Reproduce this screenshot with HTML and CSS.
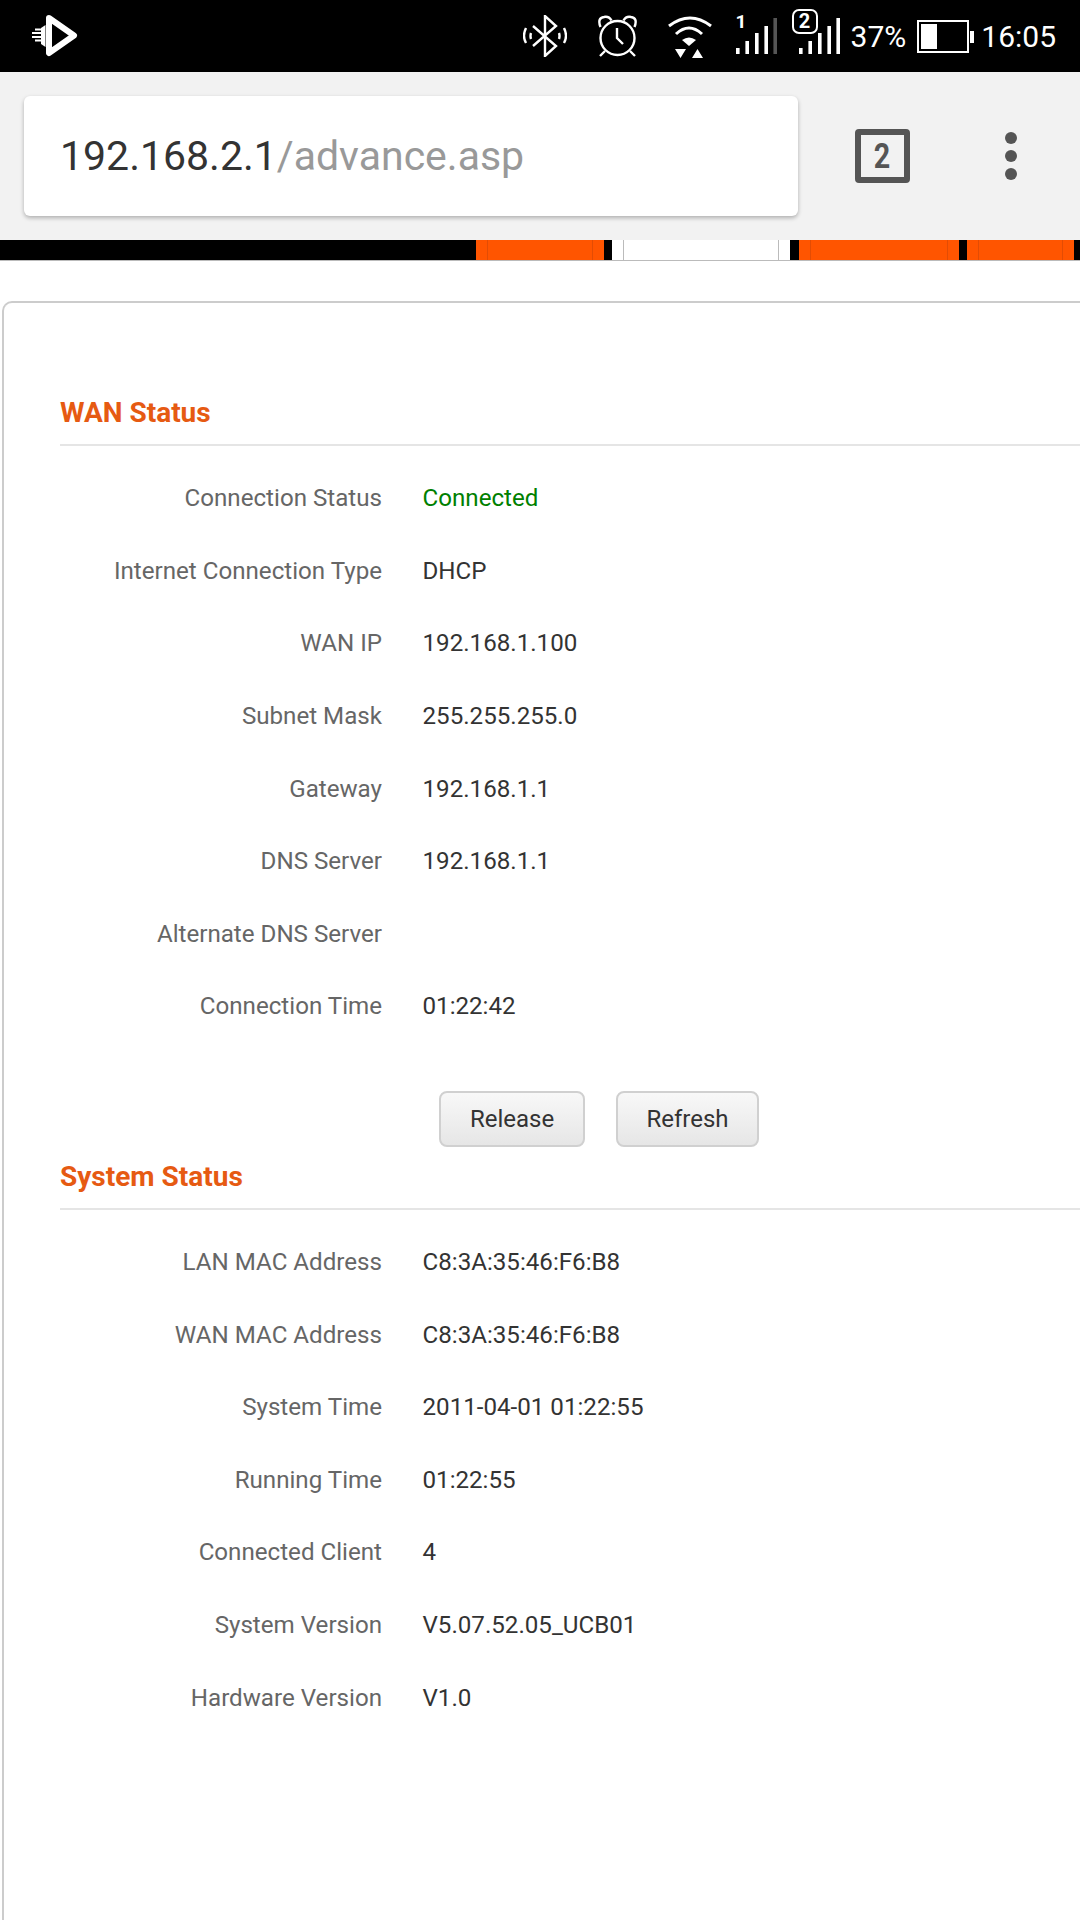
FILE: index.html
```html
<!DOCTYPE html>
<html lang="en">
<head>
<meta charset="utf-8">
<title>192.168.2.1/advance.asp</title>
<link rel="stylesheet" href="styles.css">
</head>
<body>
<header class="status-bar">
  <svg class="app-logo" viewBox="0 0 50 50" width="50" height="50">
    <path d="M20 7 L45 24.5 L20 42 Z" fill="none" stroke="#fff" stroke-width="6" stroke-linejoin="round"/>
    <path d="M16.5 14 V36 L12 33 V17 Z" fill="#fff"/>
    <path d="M6 18.5 H13 M3 22 H13 M3 26 H13 M6 29.5 H13" stroke="#fff" stroke-width="2.2" fill="none"/>
  </svg>
  <div class="status-right">
    <svg class="si-bt" viewBox="0 0 44 42" width="44" height="42" fill="none" stroke="#fff" stroke-width="2.4">
      <path d="M10 11 L33 31 L22 41 V1 L33 11 L10 31"/>
      <path d="M3 13 Q-1 21 3 28 M8 18 Q7 21 8 24 M36 18 Q37 21 36 24 M41 13 Q45 21 41 28"/>
    </svg>
    <svg class="si-alarm" viewBox="0 0 40 42" width="40" height="42" fill="none" stroke="#fff" stroke-width="2.4">
      <circle cx="19.5" cy="23" r="17"/>
      <path d="M19 13 V23 L25 29 M2.5 12 Q-1 3 6 2 Q11 1 13.5 5.5 M36.5 12 Q40 3 33 2 Q28 1 25.5 5.5 M7 36 L2 41 M32 36 L37 41"/>
    </svg>
    <svg class="si-wifi" viewBox="0 0 44 43" width="44" height="43" fill="none" stroke="#fff" stroke-width="3">
      <path d="M1 10 Q22 -6 43 10 M8 18 Q21 6 34 18"/>
      <path d="M14 24 Q21 19 28 24 L21 30 Z" fill="#fff" stroke="none"/>
      <path d="M7 33 H18 L12.5 42 Z M24 42 H35 L29.5 33 Z" fill="#fff" stroke="none"/>
    </svg>
    <div class="sim sim-one">
      <span class="sim-num">1</span>
      <svg viewBox="0 0 41 36" width="41" height="36">
        <path d="M0 30 h3.6 v6 h-3.6 Z M9.4 23 h3.6 v13 h-3.6 Z M19 15 h3.6 v21 h-3.6 Z M28.4 8 h3.6 v28 h-3.6 Z" fill="#fff"/>
        <path d="M37.4 0 h3.6 v36 h-3.6 Z" fill="#555"/>
      </svg>
    </div>
    <div class="sim sim-two">
      <span class="sim-num boxed">2</span>
      <svg viewBox="0 0 41 36" width="41" height="36" fill="#fff">
        <path d="M0 30 h3.6 v6 h-3.6 Z M9.4 23 h3.6 v13 h-3.6 Z M19 15 h3.6 v21 h-3.6 Z M28.4 8 h3.6 v28 h-3.6 Z M37.4 0 h3.6 v36 h-3.6 Z"/>
      </svg>
    </div>
    <span class="pct">37%</span>
    <div class="battery"><div class="battery-level"></div></div>
    <span class="clock">16:05</span>
  </div>
</header>

<div class="toolbar">
  <div class="url-card"><span class="host">192.168.2.1</span><span class="path">/advance.asp</span></div>
  <div class="tab-count"><span class="tab-num">2</span></div>
  <div class="menu-dots"><i></i><i></i><i></i></div>
</div>

<nav class="nav-strip">
  <div class="nav-item orange w1"><span class="nav-inner"></span></div>
  <div class="nav-item white w2"><span class="nav-inner"></span></div>
  <div class="nav-item orange w3"><span class="nav-inner"></span></div>
  <div class="nav-item orange w4"><span class="nav-inner"></span></div>
</nav>

<main class="panel">
  <section class="group">
    <h2 class="group-title">WAN Status</h2>
    <div class="row"><span class="label">Connection Status</span><span class="value ok">Connected</span></div>
    <div class="row"><span class="label">Internet Connection Type</span><span class="value">DHCP</span></div>
    <div class="row"><span class="label">WAN IP</span><span class="value">192.168.1.100</span></div>
    <div class="row"><span class="label">Subnet Mask</span><span class="value">255.255.255.0</span></div>
    <div class="row"><span class="label">Gateway</span><span class="value">192.168.1.1</span></div>
    <div class="row"><span class="label">DNS Server</span><span class="value">192.168.1.1</span></div>
    <div class="row"><span class="label">Alternate DNS Server</span><span class="value"></span></div>
    <div class="row"><span class="label">Connection Time</span><span class="value">01:22:42</span></div>
    <div class="actions">
      <button class="btn btn-release">Release</button>
      <button class="btn btn-refresh">Refresh</button>
    </div>
  </section>
  <section class="group system">
    <h2 class="group-title">System Status</h2>
    <div class="row"><span class="label">LAN MAC Address</span><span class="value">C8:3A:35:46:F6:B8</span></div>
    <div class="row"><span class="label">WAN MAC Address</span><span class="value">C8:3A:35:46:F6:B8</span></div>
    <div class="row"><span class="label">System Time</span><span class="value">2011-04-01 01:22:55</span></div>
    <div class="row"><span class="label">Running Time</span><span class="value">01:22:55</span></div>
    <div class="row"><span class="label">Connected Client</span><span class="value">4</span></div>
    <div class="row"><span class="label">System Version</span><span class="value">V5.07.52.05_UCB01</span></div>
    <div class="row"><span class="label">Hardware Version</span><span class="value">V1.0</span></div>
  </section>
</main>
</body>
</html>
```
FILE: styles.css
```css
* { box-sizing: border-box; }
html, body { margin: 0; padding: 0; }
body {
  width: 1080px;
  height: 1920px;
  overflow: hidden;
  background: #fff;
  font-family: Roboto, "Liberation Sans", sans-serif;
}

.status-bar {
  height: 72px;
  background: #000;
  display: flex;
  align-items: center;
  justify-content: space-between;
  padding: 0 24px 0 29px;
  color: #fff;
}
.app-logo { display: block; }
.status-right { display: flex; align-items: center; }
.si-bt { margin-right: 31px; }
.si-alarm { margin-right: 30px; }
.si-wifi { margin-right: 24px; margin-top: 3px; }
.sim { position: relative; width: 41px; height: 44px; margin-bottom: 8px; }
.sim svg { position: absolute; left: 0; bottom: 0; }
.sim-one { margin-right: 22px; }
.sim-two { margin-right: 11px; }
.sim-num {
  position: absolute;
  left: 0;
  top: 2px;
  font-size: 19px;
  font-weight: 700;
  line-height: 20px;
}
.sim-num.boxed {
  left: -7px;
  top: -1px;
  width: 26px;
  height: 25px;
  border: 2.4px solid #fff;
  border-radius: 7px;
  background: #000;
  text-align: center;
  font-size: 20px;
  line-height: 20px;
  z-index: 1;
}
.pct, .clock { font-size: 30px; }
.pct { margin-right: 11px; }
.battery {
  position: relative;
  width: 52px;
  height: 33px;
  border: 2px solid #fff;
  padding: 2px;
  margin-right: 12px;
}
.battery::after {
  content: "";
  position: absolute;
  right: -7px;
  top: 9px;
  width: 4px;
  height: 12px;
  background: #fff;
}
.battery-level { width: 16px; height: 100%; background: #fff; }

.toolbar {
  height: 168px;
  background: #f2f2f2;
  display: flex;
  align-items: center;
  padding-left: 24px;
}
.url-card {
  width: 774px;
  height: 120px;
  background: #fff;
  border-radius: 6px;
  box-shadow: 0 2px 4px rgba(0,0,0,.28);
  display: flex;
  align-items: center;
  padding-left: 36px;
  font-size: 41px;
}
.host { color: #333; }
.path { color: #999; }
.tab-count {
  width: 55px;
  height: 54px;
  margin-left: 57px;
  border: 6px solid #555;
  border-radius: 4px;
  color: #555;
  display: flex;
  align-items: center;
  justify-content: center;
}
.tab-num {
  font-size: 35px;
  font-weight: 700;
  line-height: 1;
  transform: scaleX(.82);
}
.menu-dots {
  margin-left: 95px;
  display: flex;
  flex-direction: column;
  gap: 6px;
}
.menu-dots i {
  display: block;
  width: 12px;
  height: 12px;
  border-radius: 50%;
  background: #555;
}

.nav-strip {
  height: 21px;
  background: #000;
  display: flex;
  border-bottom: 1px solid #bbb;
  padding-left: 476px;
}
.nav-item {
  height: 100%;
  padding: 0 11px;
  flex: none;
}
.nav-inner {
  display: block;
  height: 100%;
  border-left: 1px solid;
  border-right: 1px solid;
}
.orange { background: #ff5500; }
.orange .nav-inner { border-color: #e24c04; }
.white { background: #fff; }
.white .nav-inner { border-color: #bbb; }
.w1 { width: 128px; margin-right: 8px; }
.w2 { width: 178px; margin-right: 9px; }
.w3 { width: 160px; margin-right: 8px; }
.w4 { width: 107px; }

.panel {
  margin: 40px 0 0 2px;
  height: 1640px;
  border: 2px solid #ccc;
  border-right: 0;
  border-bottom: 0;
  border-top-left-radius: 10px;
  padding: 89px 0 0 56px;
}
.group-title {
  margin: 0;
  height: 54px;
  padding-top: 6px;
  line-height: 30px;
  font-size: 28px;
  font-weight: 700;
  color: #e65a12;
  border-bottom: 2px solid #e5e5e5;
}
.row {
  display: flex;
  align-items: center;
  height: 72.6px;
  font-size: 24.15px;
}
.group .row:first-of-type { margin-top: 16px; }
.label {
  width: 322px;
  text-align: right;
  color: #666;
}
.value {
  margin-left: 40.5px;
  color: #333;
}
.value.ok { color: #008000; }

.actions {
  display: flex;
  margin-top: 48px;
  padding-left: 379px;
  gap: 31px;
}
.btn {
  height: 56px;
  border: 2px solid #d0d0d0;
  border-radius: 8px;
  background: linear-gradient(#f8f8f8, #e6e6e6);
  color: #333;
  font-family: Roboto, "Liberation Sans", sans-serif;
  font-size: 24px;
  padding: 0;
}
.btn-release { width: 146px; }
.btn-refresh { width: 143px; }
.system { margin-top: 9px; }
```
